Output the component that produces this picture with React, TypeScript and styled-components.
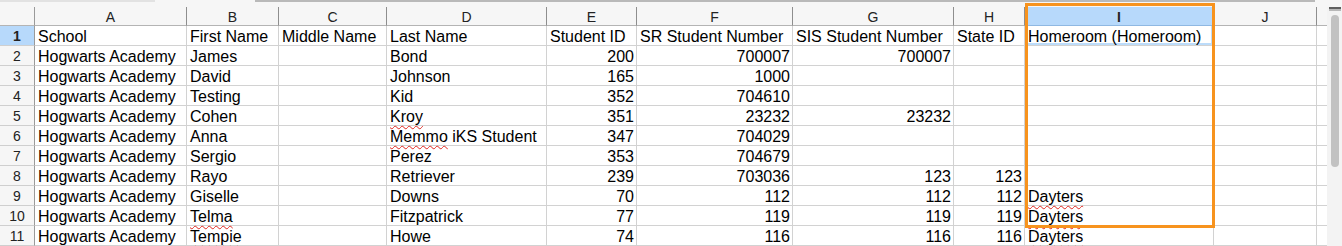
import React from 'react'
import styled, { createGlobalStyle } from 'styled-components'

const GlobalStyle = createGlobalStyle`
  html, body {
    margin: 0;
    padding: 0;
    background: #f6f6f6;
  }
  * {
    box-sizing: border-box;
  }
`

const COLUMNS = [152, 92, 108, 160, 90, 156, 161, 71, 189, 103]
const LETTERS = ['A', 'B', 'C', 'D', 'E', 'F', 'G', 'H', 'I', 'J']
const ACTIVE_COL = 8
const ACTIVE_ROW = 1
const MISSPELLED = new Set(['Kroy', 'Memmo', 'Telma', 'Tempie', 'Dayters'])

const S = 'Hogwarts Academy'
const ROWS: (string | number)[][] = [
  ['School', 'First Name', 'Middle Name', 'Last Name', 'Student ID', 'SR Student Number', 'SIS Student Number', 'State ID', 'Homeroom (Homeroom)', ''],
  [S, 'James', '', 'Bond', 200, 700007, 700007, '', '', ''],
  [S, 'David', '', 'Johnson', 165, 1000, '', '', '', ''],
  [S, 'Testing', '', 'Kid', 352, 704610, '', '', '', ''],
  [S, 'Cohen', '', 'Kroy', 351, 23232, 23232, '', '', ''],
  [S, 'Anna', '', 'Memmo iKS Student', 347, 704029, '', '', '', ''],
  [S, 'Sergio', '', 'Perez', 353, 704679, '', '', '', ''],
  [S, 'Rayo', '', 'Retriever', 239, 703036, 123, 123, '', ''],
  [S, 'Giselle', '', 'Downs', 70, 112, 112, 112, 'Dayters', ''],
  [S, 'Telma', '', 'Fitzpatrick', 77, 119, 119, 119, 'Dayters', ''],
  [S, 'Tempie', '', 'Howe', 74, 116, 116, 116, 'Dayters', ''],
]

const Page = styled.div`
  position: relative;
  width: 1342px;
  height: 246px;
  overflow: hidden;
  font-family: 'Liberation Sans', Arial, sans-serif;
  color: #000;
  background: #f6f6f6;
`

const TopStrip = styled.div`
  height: 7px;
  display: flex;
  align-items: flex-start;
`

const StripSegment = styled.div<{ $width: number; $tone: string }>`
  width: ${(p) => p.$width}px;
  height: 2px;
  background: ${(p) => p.$tone};
`

const Sheet = styled.div`
  display: flex;
`

const Grid = styled.div`
  display: grid;
  grid-template-columns: 35px ${COLUMNS.map((w) => `${w}px`).join(' ')} 10px;
  grid-template-rows: 19px repeat(${ROWS.length}, 20px);
  background: #fff;
`

const Corner = styled.div`
  background: #f6f6f6;
  border-right: 1px solid #9a9a9a;
  border-bottom: 1px solid #b4b4b4;
`

const ColHeader = styled.div<{ $active?: boolean }>`
  background: ${(p) => (p.$active ? '#b7d9fb' : '#f6f6f6')};
  border-right: 1px solid #8e8e8e;
  border-bottom: 1px solid ${(p) => (p.$active ? '#8fb8e2' : '#b4b4b4')};
  font-size: 14px;
  font-weight: ${(p) => (p.$active ? 700 : 400)};
  color: #222;
  line-height: 18px;
  padding-top: 1px;
  text-align: center;
`

const TailHeader = styled.div`
  background: #f6f6f6;
  border-bottom: 1px solid #b4b4b4;
`

const RowHeader = styled.div<{ $active?: boolean }>`
  background: ${(p) => (p.$active ? '#b7d9fb' : '#f6f6f6')};
  border-right: 1px solid #9a9a9a;
  border-bottom: 1px solid #cfcfcf;
  font-size: 14px;
  font-weight: ${(p) => (p.$active ? 700 : 400)};
  color: #222;
  line-height: 17px;
  padding-top: 2px;
  text-align: center;
`

const Cell = styled.div<{ $right?: boolean; $cursor?: boolean }>`
  border-right: 1px solid #d2d2d2;
  border-bottom: 1px solid #d2d2d2;
  font-size: 16px;
  line-height: 17px;
  padding: 2px 2px 0 3px;
  white-space: nowrap;
  overflow: visible;
  text-align: ${(p) => (p.$right ? 'right' : 'left')};
  box-shadow: ${(p) => (p.$cursor ? 'inset -2px -2px 0 #bcdcfa' : 'none')};
`

const TailCell = styled.div`
  border-bottom: 1px solid #d2d2d2;
`

const Squiggle = styled.span`
  text-decoration: underline wavy #e0261e;
  text-decoration-thickness: 1px;
  text-underline-offset: 3px;
  text-decoration-skip-ink: none;
`

const Scrollbar = styled.div`
  width: 15px;
  height: 239px;
  background: #f3f3f3;
  display: flex;
  flex-direction: column;
  align-items: center;
`

const ScrollButton = styled.div`
  width: 12px;
  height: 4px;
  margin-left: 1px;
  background: #b8b8b8;
  border-top: 2px solid #606060;
`

const Thumb = styled.div`
  width: 8px;
  height: 152px;
  margin-top: 4px;
  margin-left: 1px;
  border-radius: 4px;
  background: #c2c2c2;
`

const Highlight = styled.div`
  position: absolute;
  left: 1025px;
  top: 3px;
  width: 190px;
  height: 225px;
  border: 3px solid #f7931e;
  pointer-events: none;
`

const renderText = (value: string | number) => {
  if (typeof value === 'number') return value
  return value.split(' ').map((word, i) => (
    <React.Fragment key={i}>
      {i > 0 && ' '}
      {MISSPELLED.has(word) ? <Squiggle>{word}</Squiggle> : word}
    </React.Fragment>
  ))
}

export default function App() {
  return (
    <Page>
      <GlobalStyle />
      <TopStrip>
        <StripSegment $width={155} $tone="#e2e2e2" />
        <StripSegment $width={100} $tone="transparent" />
        <StripSegment $width={1060} $tone="#b9b9b9" />
      </TopStrip>
      <Sheet>
        <Grid>
          <Corner />
          {LETTERS.map((l, i) => (
            <ColHeader key={l} $active={i === ACTIVE_COL}>
              {l}
            </ColHeader>
          ))}
          <TailHeader />
          {ROWS.map((row, r) => (
            <React.Fragment key={r}>
              <RowHeader $active={r + 1 === ACTIVE_ROW}>{r + 1}</RowHeader>
              {row.map((value, c) => (
                <Cell
                  key={c}
                  $right={typeof value === 'number'}
                  $cursor={r + 1 === ACTIVE_ROW && c === ACTIVE_COL}
                >
                  {renderText(value)}
                </Cell>
              ))}
              <TailCell />
            </React.Fragment>
          ))}
        </Grid>
        <Scrollbar>
          <ScrollButton />
          <Thumb />
        </Scrollbar>
      </Sheet>
      <Highlight />
    </Page>
  )
}
